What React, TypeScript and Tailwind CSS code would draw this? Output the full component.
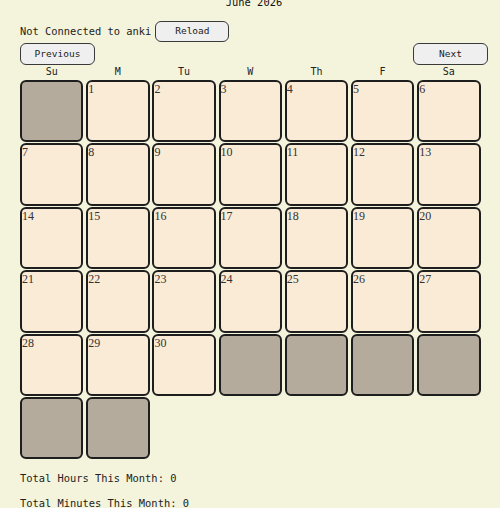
import React from "react";

const mono = { fontFamily: '"DejaVu Sans Mono", "Liberation Mono", monospace' };

const DAYS = ["Su", "M", "Tu", "W", "Th", "F", "Sa"];

type Cell = { day: number | null };

function buildCells(): Cell[] {
  const cells: Cell[] = [{ day: null }];
  for (let d = 1; d <= 30; d++) cells.push({ day: d });
  for (let i = 0; i < 6; i++) cells.push({ day: null });
  return cells;
}

function Btn({ label, className = "" }: { label: string; className?: string }) {
  return (
    <button
      className={`h-[22px] w-[75px] rounded-[6px] border-[1.5px] border-[#3a3a3a] bg-[#efefef] text-[9.5px] text-[#222] ${className}`}
      style={mono}
    >
      {label}
    </button>
  );
}

export default function App() {
  const cells = buildCells();
  return (
    <div className="min-h-screen w-full bg-[#f4f4dc] text-[#222]" style={mono}>
      <div className="ml-[20px] w-[468px]">
        <div className="-mt-[6px] h-[16px] text-center text-[10.4px] leading-[16px] text-[#111]">
          June 2026
        </div>
        <div className="mt-[10.7px] flex h-[21.6px] items-center">
          <span className="text-[10.4px]">Not Connected to anki</span>
          <button
            className="ml-[4px] h-[21.6px] w-[74px] rounded-[6px] border-[1.5px] border-[#3a3a3a] bg-[#efefef] text-[9.5px] text-[#222]"
            style={mono}
          >
            Reload
          </button>
        </div>
        <div className="mt-[1px] flex h-[22px] justify-between">
          <Btn label="Previous" />
          <Btn label="Next" />
        </div>
        <div className="grid h-[14.7px] grid-cols-[repeat(7,63.4px)] gap-x-[2.8px] text-[10px] leading-[14.7px]">
          {DAYS.map((d) => (
            <div key={d} className="text-center">
              {d}
            </div>
          ))}
        </div>
        <div className="grid grid-cols-[repeat(7,63.4px)] auto-rows-[62.4px] gap-x-[2.8px] gap-y-[1px]">
          {cells.map((c, i) => (
            <div
              key={i}
              className={`rounded-[6px] border-2 border-[#1e1e1e] ${
                c.day === null ? "bg-[#b4ab9d]" : "bg-[#faebd7]"
              }`}
            >
              {c.day !== null && (
                <span
                  className="block pt-[1px] text-[12px] leading-[12px] text-[#333]"
                  style={{ fontFamily: '"Liberation Serif", "Times New Roman", serif' }}
                >
                  {c.day}
                </span>
              )}
            </div>
          ))}
        </div>
        <p className="mt-[12px] h-[14px] text-[10.4px] leading-[14px]">Total Hours This Month: 0</p>
        <p className="mt-[11px] h-[14px] text-[10.4px] leading-[14px]">Total Minutes This Month: 0</p>
      </div>
    </div>
  );
}
